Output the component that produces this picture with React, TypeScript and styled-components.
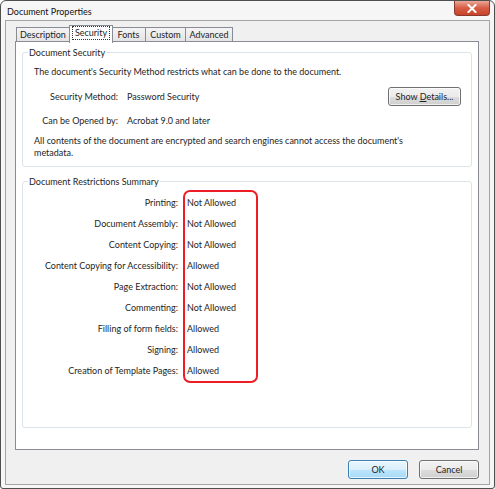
import React from "react";
import styled, { createGlobalStyle } from "styled-components";

const GlobalStyle = createGlobalStyle`
  html, body {
    margin: 0;
    padding: 0;
    background: #ffffff;
  }
  body {
    font-family: Lato, "Liberation Sans", Arial, sans-serif;
    font-size: 9px;
    color: #1e1e1e;
  }
`;

const Window = styled.div`
  width: 495px;
  height: 489px;
  box-sizing: border-box;
  border: 1px solid #4f4f4f;
  border-radius: 6px 6px 3px 3px;
  background: #f6f6f6;
  padding: 0 4px 3px 4px;
  display: flex;
  flex-direction: column;
  overflow: hidden;
`;

const TitleBar = styled.div`
  height: 19px;
  display: flex;
  align-items: flex-start;
  justify-content: space-between;
`;

const Title = styled.span`
  margin: 5px 0 0 2px;
  font-size: 9px;
  color: #111;
`;

const CloseButton = styled.div`
  width: 36px;
  height: 15px;
  box-sizing: border-box;
  border: 1px solid #8a3a2c;
  border-top: none;
  border-radius: 0 0 4px 4px;
  background: linear-gradient(#eaa898, #d85d44 50%, #c8432b);
  display: flex;
  align-items: center;
  justify-content: center;
`;

const Client = styled.div`
  flex: 1;
  border: 1px solid #a5a5a5;
  background: #f0f0f0;
  padding: 4px 10px 5px 9px;
  display: flex;
  flex-direction: column;
`;

const TabStrip = styled.div`
  display: flex;
  align-items: flex-end;
  padding-left: 1px;
  height: 17px;
`;

const Tab = styled.div<{ $active?: boolean; $width: number }>`
  box-sizing: border-box;
  width: ${(p) => p.$width}px;
  height: ${(p) => (p.$active ? "18px" : "15px")};
  padding-top: 1px;
  margin: ${(p) => (p.$active ? "0 -1px -1px -1px" : "0")};
  border: 1px solid #898c95;
  border-bottom: ${(p) => (p.$active ? "none" : "1px solid #898c95")};
  border-left-width: ${(p) => (p.$active ? "1px" : "0")};
  background: ${(p) => (p.$active ? "#ffffff" : "linear-gradient(#f4f4f4, #e4e4e4)")};
  position: relative;
  z-index: ${(p) => (p.$active ? 2 : 1)};
  display: flex;
  justify-content: center;
  align-items: flex-start;
  &:first-child {
    border-left-width: 1px;
  }
`;

const TabLabel = styled.span<{ $focused?: boolean }>`
  padding: 0 2px;
  line-height: 12px;
  outline: ${(p) => (p.$focused ? "1px dotted #333" : "none")};
`;

const Panel = styled.div`
  flex: 1;
  background: #ffffff;
  border: 1px solid #898c95;
  margin-top: -1px;
  padding: 4px 6px 0 6px;
  display: flex;
  flex-direction: column;
  gap: 8px;
`;

const Group = styled.fieldset<{ $height: number }>`
  margin: 0;
  height: ${(p) => p.$height}px;
  box-sizing: border-box;
  border: 1px solid #dde3ea;
  border-radius: 3px;
  padding: 0 10px 0 11px;
`;

const Legend = styled.legend`
  padding: 0 1px;
  margin-left: -6px;
  line-height: 13px;
`;

const Paragraph = styled.p<{ $top: number }>`
  margin: ${(p) => p.$top}px 0 0 0;
  max-width: 400px;
  line-height: 12px;
`;

const InfoRow = styled.div<{ $top: number }>`
  display: grid;
  grid-template-columns: 84px 1fr auto;
  align-items: center;
  margin-top: ${(p) => p.$top}px;
  min-height: 12px;
  line-height: 12px;
`;

const InfoLabel = styled.span`
  text-align: right;
  white-space: nowrap;
`;

const InfoValue = styled.span`
  padding-left: 9px;
`;

const Button = styled.button<{ $default?: boolean }>`
  font: inherit;
  color: #1e1e1e;
  box-sizing: border-box;
  height: 19px;
  padding: 0;
  border: 1px solid ${(p) => (p.$default ? "#3c7fb1" : "#707070")};
  border-radius: 3px;
  background: ${(p) =>
    p.$default
      ? "linear-gradient(#eaf6fd 0%, #d9f0fc 50%, #bee6fd 51%, #a7d9f5 100%)"
      : "linear-gradient(#f2f2f2 0%, #ebebeb 50%, #dddddd 51%, #cfcfcf 100%)"};
  box-shadow: inset 0 0 0 1px rgba(255, 255, 255, 0.7);
`;

const DetailsButton = styled(Button)`
  width: 73px;
`;

const Restrictions = styled.div`
  display: flex;
  margin-top: 2px;
`;

const LabelColumn = styled.div`
  flex: 0 0 149px;
  box-sizing: border-box;
  padding: 2px 5px 0 0;
  text-align: right;
`;

const RestrictionLabel = styled.div`
  line-height: 21px;
  white-space: nowrap;
`;

const ValueBox = styled.div`
  flex: 0 0 75px;
  box-sizing: border-box;
  border: 2px solid #ee1c24;
  border-radius: 7px;
  padding-left: 2px;
`;

const RestrictionValue = styled.div`
  line-height: 21px;
  white-space: nowrap;
`;

const Footer = styled.div`
  display: flex;
  justify-content: flex-end;
  gap: 11px;
  padding-top: 10px;
`;

const DialogButton = styled(Button)`
  width: 60px;
`;

const restrictions: [string, string][] = [
  ["Printing:", "Not Allowed"],
  ["Document Assembly:", "Not Allowed"],
  ["Content Copying:", "Not Allowed"],
  ["Content Copying for Accessibility:", "Allowed"],
  ["Page Extraction:", "Not Allowed"],
  ["Commenting:", "Not Allowed"],
  ["Filling of form fields:", "Allowed"],
  ["Signing:", "Allowed"],
  ["Creation of Template Pages:", "Allowed"],
];

const tabs: [string, number][] = [
  ["Description", 54],
  ["Security", 44],
  ["Fonts", 34],
  ["Custom", 40],
  ["Advanced", 47],
];

export default function App() {
  return (
    <>
      <GlobalStyle />
      <Window>
        <TitleBar>
          <Title>Document Properties</Title>
          <CloseButton>
            <svg width="10" height="9" viewBox="0 0 10 9">
              <path
                d="M1.5 1 L8.5 8 M8.5 1 L1.5 8"
                stroke="#ffffff"
                strokeWidth="2"
                strokeLinecap="square"
              />
            </svg>
          </CloseButton>
        </TitleBar>
        <Client>
          <TabStrip>
            {tabs.map(([t, w]) => (
              <Tab key={t} $width={w} $active={t === "Security"}>
                <TabLabel $focused={t === "Security"}>{t}</TabLabel>
              </Tab>
            ))}
          </TabStrip>
          <Panel>
            <Group $height={121}>
              <Legend>Document Security</Legend>
              <Paragraph $top={7}>
                The document's Security Method restricts what can be done to the document.
              </Paragraph>
              <InfoRow $top={9}>
                <InfoLabel>Security Method:</InfoLabel>
                <InfoValue>Password Security</InfoValue>
                <DetailsButton>
                  Show <u>D</u>etails...
                </DetailsButton>
              </InfoRow>
              <InfoRow $top={9}>
                <InfoLabel>Can be Opened by:</InfoLabel>
                <InfoValue>Acrobat 9.0 and later</InfoValue>
              </InfoRow>
              <Paragraph $top={8}>
                All contents of the document are encrypted and search engines cannot access the
                document's metadata.
              </Paragraph>
            </Group>
            <Group $height={253}>
              <Legend>Document Restrictions Summary</Legend>
              <Restrictions>
                <LabelColumn>
                  {restrictions.map(([label]) => (
                    <RestrictionLabel key={label}>{label}</RestrictionLabel>
                  ))}
                </LabelColumn>
                <ValueBox>
                  {restrictions.map(([label, value]) => (
                    <RestrictionValue key={label}>{value}</RestrictionValue>
                  ))}
                </ValueBox>
              </Restrictions>
            </Group>
          </Panel>
          <Footer>
            <DialogButton $default>OK</DialogButton>
            <DialogButton>Cancel</DialogButton>
          </Footer>
        </Client>
      </Window>
    </>
  );
}
